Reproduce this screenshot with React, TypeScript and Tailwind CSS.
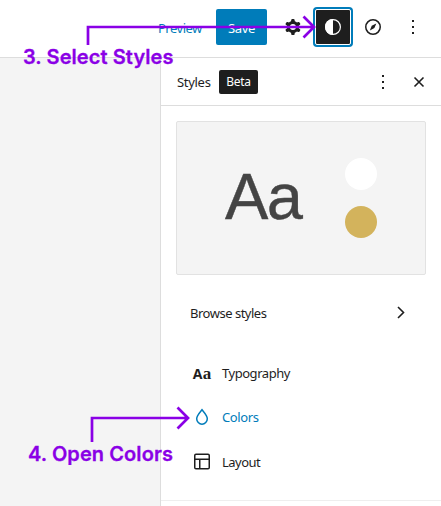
import type { ReactNode } from "react";

function MoreIcon() {
  return (
    <svg width="24" height="24" viewBox="0 0 24 24" fill="currentColor" shapeRendering="crispEdges">
      <path d="M11 5h2v2h-2zM11 11h2v2h-2zM11 17h2v2h-2z" />
    </svg>
  );
}

function CogIcon() {
  return (
    <svg width="24" height="24" viewBox="0 0 24 24" fill="currentColor">
      <path
        fillRule="evenodd"
        clipRule="evenodd"
        d="M10.289 4.836A1 1 0 0111.275 4h1.306a1 1 0 01.987.836l.244 1.466c.787.26 1.503.679 2.108 1.218l1.393-.522a1 1 0 011.216.437l.653 1.13a1 1 0 01-.23 1.273l-1.148.944a6.025 6.025 0 010 2.435l1.149.946a1 1 0 01.23 1.272l-.653 1.13a1 1 0 01-1.216.437l-1.394-.522c-.605.54-1.32.958-2.108 1.218l-.244 1.466a1 1 0 01-.987.836h-1.306a1 1 0 01-.986-.836l-.244-1.466a5.995 5.995 0 01-2.108-1.218l-1.394.522a1 1 0 01-1.217-.436l-.653-1.131a1 1 0 01.23-1.272l1.149-.946a6.026 6.026 0 010-2.435l-1.148-.944a1 1 0 01-.23-1.272l.653-1.131a1 1 0 011.217-.437l1.393.522a5.994 5.994 0 012.108-1.218l.244-1.466zM14.929 12a3 3 0 11-6 0 3 3 0 016 0z"
      />
    </svg>
  );
}

function StylesIcon() {
  return (
    <svg width="24" height="24" viewBox="0 0 24 24">
      <circle cx="12" cy="12" r="7.4" fill="none" stroke="currentColor" strokeWidth="1.2" />
      <path d="M12 4a8 8 0 000 16z" fill="currentColor" />
    </svg>
  );
}

function CompassIcon() {
  return (
    <svg width="24" height="24" viewBox="0 0 24 24">
      <circle cx="12" cy="12" r="7.25" fill="none" stroke="currentColor" strokeWidth="1.5" />
      <path d="M15.3 8.5L10.7 10.8 8.9 15.5 13.4 13.1z" fill="currentColor" />
    </svg>
  );
}

function MenuRow({ icon, label, className }: { icon: ReactNode; label: ReactNode; className: string }) {
  return (
    <div className={`flex items-center gap-2 pl-[29px] ${className}`}>
      <span className="flex size-6 items-center justify-center">{icon}</span>
      {label}
    </div>
  );
}

export default function App() {
  return (
    <div className="relative flex h-[506px] w-[441px] flex-col overflow-hidden bg-white font-['Noto_Sans',sans-serif] text-[13px] leading-5 text-[#1e1e1e]">
      <header className="flex h-[58px] shrink-0 items-start border-b border-[#ddd] pt-[9px] pl-[158px]">
        <span className="flex h-9 w-[58px] items-center pt-[2px] tracking-[-0.5px] text-[#007cba]">Preview</span>
        <button className="flex h-9 w-[51px] items-center justify-center rounded-[2px] bg-[#007cba] pt-[2px] tracking-[-0.35px] text-white">
          Save
        </button>
        <span className="ml-2 flex size-9 items-center justify-center"><CogIcon /></span>
        <button className="ml-1 flex size-9 items-center justify-center rounded-[2px] border border-white bg-[#1e1e1e] text-white ring-2 ring-[#007cba]">
          <StylesIcon />
        </button>
        <span className="ml-1 flex size-9 items-center justify-center"><CompassIcon /></span>
        <span className="ml-1 flex size-9 items-center justify-center"><MoreIcon /></span>
      </header>

      <div className="flex min-h-0 flex-1">
        <main className="w-40 shrink-0 bg-[#f4f4f4]" />
        <aside className="flex flex-1 flex-col border-l border-[#ddd]">
          <div className="flex h-12 shrink-0 items-center border-b border-[#ddd] pl-4">
            <span className="w-[42px] tracking-[-0.3px]">Styles</span>
            <span className="flex h-6 w-[39px] items-center justify-center rounded-[2px] bg-[#1e1e1e] pt-[1px] text-[12px] tracking-[-0.3px] text-white">Beta</span>
            <span className="ml-[113px] flex size-6"><MoreIcon /></span>
            <svg className="ml-3" width="24" height="24" viewBox="0 0 24 24" fill="none" stroke="currentColor" strokeWidth="1.6">
              <path d="M7.5 7.5l9 9M16.5 7.5l-9 9" />
            </svg>
          </div>

          <div className="mt-[15px] ml-[15px] flex h-[154px] w-[250px] shrink-0 items-center rounded-[2px] border border-[#e2e2e2] bg-[#f4f4f4] pl-12">
            <span className="w-[120px] pb-[3px] font-['Liberation_Sans',Arial,sans-serif] text-[65px] leading-[78px] tracking-[-1.5px] text-[#444] [-webkit-text-stroke:0.4px_#444]">
              Aa
            </span>
            <span className="flex flex-col gap-4">
              <span className="size-8 rounded-full bg-white" />
              <span className="size-8 rounded-full bg-[#d3b35c]" />
            </span>
          </div>

          <div className="mt-4 flex h-[43px] shrink-0 items-center justify-between pr-[29px] pl-[29px]">
            <span className="tracking-[-0.49px]">Browse styles</span>
            <svg width="24" height="24" viewBox="0 0 24 24" fill="none" stroke="currentColor" strokeWidth="1.6">
              <path d="M10 6L15.500 11.500 10 17" />
            </svg>
          </div>

          <nav className="mt-[17px] flex flex-col">
            <MenuRow
              className="h-11"
              icon={
                <span className="flex items-baseline gap-[0.5px] font-bold leading-none">
                  <span className="font-['Open_Sans',sans-serif] text-[14px]">A</span>
                  <span className="font-['Liberation_Serif',serif] text-[17px]">a</span>
                </span>
              }
              label={<span className="tracking-[-0.46px]">Typography</span>}
            />
            <MenuRow
              className="h-11 text-[#007cba]"
              icon={
                <svg width="24" height="24" viewBox="0 0 24 24" fill="none" stroke="currentColor" strokeWidth="1.5">
                  <path d="M12 4.800C10.200 7.300 6.700 10.300 6.700 13.700a5.300 5.500 0 0010.600 0C17.300 10.300 13.800 7.300 12 4.800z" />
                </svg>
              }
              label={<span className="tracking-[-0.4px]">Colors</span>}
            />
            <MenuRow
              className="h-[45px]"
              icon={
                <svg width="24" height="24" viewBox="0 0 24 24" fill="none" stroke="currentColor" strokeWidth="1.5">
                  <rect x="4.750" y="4.250" width="14.500" height="14.500" rx="1.250" />
                  <path d="M4.750 9.250h14.500M9.750 9.250v9.500" />
                </svg>
              }
              label={<span className="tracking-[-0.52px]">Layout</span>}
            />
          </nav>
          <div className="mt-[16px] border-t border-[#eee]" />
        </aside>
      </div>

      <svg className="pointer-events-none absolute inset-0" width="441" height="506" fill="none" stroke="#8a00e6" strokeWidth="2.700">
        <path d="M88 45V27H314M303.500 16.500L314 27L303.500 37.500" />
        <path d="M92 442V418H187.500M177.500 407.500L188 418L177.500 428.500" />
      </svg>
      <span className="absolute top-[45px] left-[23px] whitespace-nowrap font-['Inter',sans-serif] text-[20px] font-semibold leading-6 tracking-[0.08px] text-[#8a00e6] [-webkit-text-stroke:0.3px_#8a00e6]">
        3. Select Styles
      </span>
      <span className="absolute top-[442px] left-[28px] whitespace-nowrap font-['Inter',sans-serif] text-[20px] font-semibold leading-6 tracking-[0.08px] text-[#8a00e6] [-webkit-text-stroke:0.3px_#8a00e6]">
        4. Open Colors
      </span>
    </div>
  );
}
